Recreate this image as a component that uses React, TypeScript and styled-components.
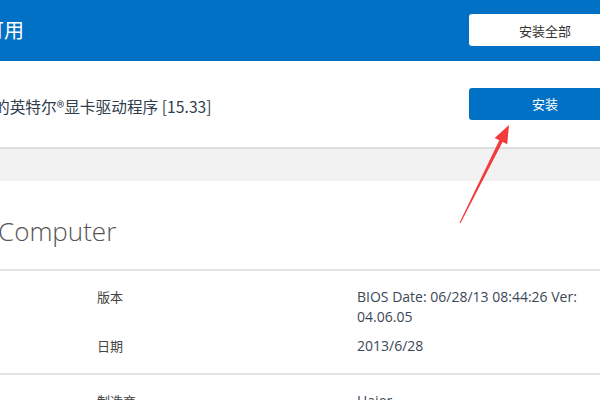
import React from "react";
import styled, { createGlobalStyle } from "styled-components";

const GlobalStyle = createGlobalStyle`
  html, body {
    margin: 0;
    padding: 0;
    background: #ffffff;
    overflow: hidden;
  }
  body {
    font-family: "Open Sans", "Noto Sans CJK SC", sans-serif;
  }
`;

const CJK = `"Noto Sans CJK SC", "Open Sans", sans-serif`;

const Viewport = styled.div`
  position: relative;
  width: 600px;
  height: 400px;
  overflow: hidden;
  background: #ffffff;
`;

const Page = styled.div`
  width: 641px;
  margin-left: -20px;
  display: flex;
  flex-direction: column;
`;

const Header = styled.div`
  height: 61px;
  background: #0071c5;
  display: flex;
  align-items: center;
  justify-content: space-between;
  padding-left: 4px;
  box-sizing: border-box;
`;

const HeaderTitle = styled.div`
  font-family: ${CJK};
  font-size: 20px;
  color: #ffffff;
  line-height: 1;
  margin-top: -1px;
`;

const Button = styled.button<{ $primary?: boolean }>`
  width: 152px;
  height: 32px;
  border: none;
  border-radius: 3px;
  font-family: ${CJK};
  font-size: 13px;
  cursor: pointer;
  margin-top: -1px;
  background: ${({ $primary }) => ($primary ? "#0071c5" : "#ffffff")};
  color: ${({ $primary }) => ($primary ? "#ffffff" : "#333333")};
`;

const DriverRow = styled.div`
  height: 88px;
  display: flex;
  align-items: center;
  justify-content: space-between;
  padding-left: 14px;
  box-sizing: border-box;
  border-bottom: 2px solid #dcdcdc;
`;

const DriverName = styled.div`
  font-family: ${CJK};
  font-size: 15.7px;
  color: #2f3d4c;
  margin-top: 4px;
`;

const Band = styled.div`
  height: 32px;
  background: #f2f2f2;
`;

const SectionTitle = styled.h2`
  margin: 0;
  padding: 30px 0 0 18px;
  height: 88px;
  box-sizing: border-box;
  font-family: "Open Sans", sans-serif;
  font-weight: 300;
  font-size: 26px;
  line-height: 40px;
  color: #555555;
`;

const Group = styled.div`
  border-top: 2px solid #e3e3e3;
  padding: 16px 0 17px 117px;
  display: flex;
  flex-direction: column;
  gap: 9px;
`;

const Row = styled.div`
  display: grid;
  grid-template-columns: 260px 236px;
  line-height: 20px;
`;

const Label = styled.div`
  font-family: ${CJK};
  font-size: 13px;
  color: #444444;
`;

const Value = styled.div`
  font-family: "Open Sans", ${CJK};
  font-size: 14px;
  color: #3b4756;
`;

const Arrow = styled.svg`
  position: absolute;
  left: 440px;
  top: 115px;
  width: 80px;
  height: 115px;
`;

const groups = [
  [
    { label: "版本", value: "BIOS Date: 06/28/13 08:44:26 Ver: 04.06.05" },
    { label: "日期", value: "2013/6/28" },
  ],
  [{ label: "制造商", value: "Haier" }],
];

export default function App() {
  return (
    <Viewport>
      <GlobalStyle />
      <Page>
        <Header>
          <HeaderTitle>可用</HeaderTitle>
          <Button>安装全部</Button>
        </Header>
        <DriverRow>
          <DriverName>的英特尔®显卡驱动程序 [15.33]</DriverName>
          <Button $primary>安装</Button>
        </DriverRow>
        <Band />
        <SectionTitle>Computer</SectionTitle>
        {groups.map((items, i) => (
          <Group key={i}>
            {items.map((item) => (
              <Row key={item.label}>
                <Label>{item.label}</Label>
                <Value>{item.value}</Value>
              </Row>
            ))}
          </Group>
        ))}
      </Page>
      <Arrow viewBox="0 0 80 115">
        <polygon
          points="69,10 67.2,29.2 62.6,26.9 20.5,108.2 19.5,107.8 59.3,25.3 54.7,23 "
          fill="#f23b3b"
        />
      </Arrow>
    </Viewport>
  );
}
